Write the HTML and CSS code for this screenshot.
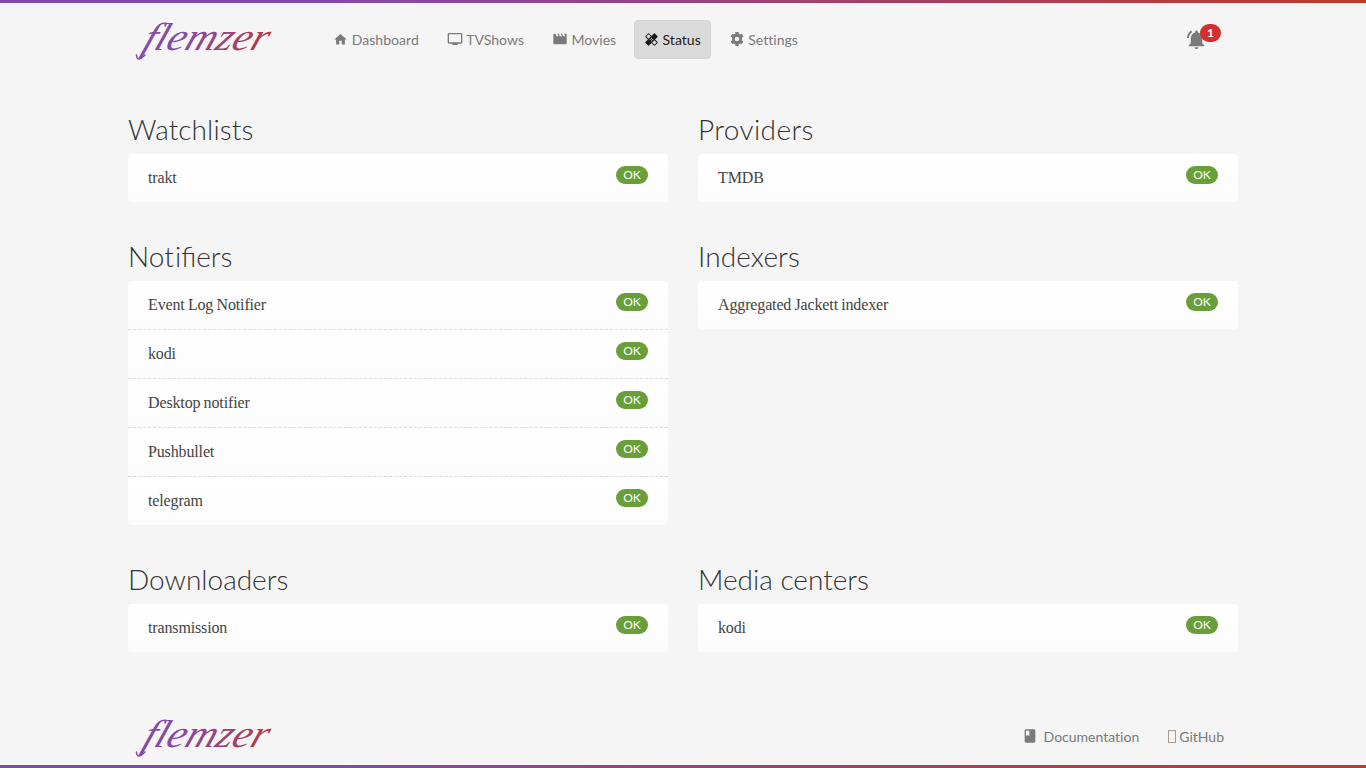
FILE: index.html
```html
<!DOCTYPE html>
<html lang="en">
<head>
<meta charset="utf-8">
<title>flemzer - Status</title>
<link rel="stylesheet" href="styles.css">
</head>
<body>
<div class="page">
  <header class="header">
    <svg class="logo" width="150" height="50" viewBox="0 0 150 50" role="img" aria-label="flemzer">
      <defs><linearGradient id="brand" gradientUnits="userSpaceOnUse" x1="8" y1="0" x2="142" y2="0"><stop offset="0" stop-color="#834ba8"/><stop offset=".3" stop-color="#834ba8"/><stop offset="1" stop-color="#b8383d"/></linearGradient></defs>
      <text class="logo-text" x="14" y="36" textLength="124" lengthAdjust="spacingAndGlyphs" transform="translate(12 0) skewX(-20)" fill="url(#brand)">flemzer</text>
      <path class="swash" d="M17 41Q9 49 8.500 41" stroke="#834ba8"/>
    </svg>
    <nav class="nav">
      <a class="nav-item"><svg class="icon" viewBox="0 0 24 24"><path d="M10 20v-6h4v6h5v-8h3L12 3 2 12h3v8z"/></svg>Dashboard</a>
      <a class="nav-item"><svg class="icon wide" viewBox="0 0 24 24"><path d="M21 3H3c-1.100 0-2 .9-2 2v12c0 1.100.9 2 2 2h5v2h8v-2h5c1.100 0 2-.9 2-2V5c0-1.100-.9-2-2-2zm0 14H3V5h18v12z"/></svg>TVShows</a>
      <a class="nav-item"><svg class="icon wide" viewBox="0 0 24 24"><path d="M18 4l2 4h-3l-2-4h-2l2 4h-3l-2-4H8l2 4H7L5 4H4c-1.100 0-2 .9-2 2v12c0 1.100.9 2 2 2h16c1.100 0 2-.9 2-2V4h-4z"/></svg>Movies</a>
      <a class="nav-item active"><svg class="icon" viewBox="0 0 24 24"><path d="M17.730 12.020l3.980-3.980c.39-.39.39-1.020 0-1.410l-4.340-4.340c-.39-.39-1.020-.39-1.410 0l-3.980 3.980L8 2.290c-.39-.39-1.020-.39-1.410 0L2.250 6.630c-.39.39-.39 1.020 0 1.410l3.980 3.980L2.250 16c-.39.39-.39 1.020 0 1.410l4.340 4.340c.39.39 1.020.39 1.410 0l3.980-3.980 3.980 3.980c.39.39 1.020.39 1.410 0l4.340-4.340c.39-.39.39-1.020 0-1.410l-3.980-3.980zM12 9c.55 0 1 .45 1 1s-.45 1-1 1-1-.45-1-1 .45-1 1-1zm-4.710 1.960L3.660 7.340l3.630-3.630 3.620 3.620-3.620 3.630zM10 13c-.55 0-1-.45-1-1s.45-1 1-1 1 .45 1 1-.45 1-1 1zm2 2c-.55 0-1-.45-1-1s.45-1 1-1 1 .45 1 1-.45 1-1 1zm2-4c.55 0 1 .45 1 1s-.45 1-1 1-1-.45-1-1 .45-1 1-1zm2.660 9.340l-3.630-3.620 3.630-3.630 3.620 3.620-3.620 3.630z"/></svg>Status</a>
      <a class="nav-item"><svg class="icon wide" viewBox="0 0 24 24"><path fill-rule="evenodd" d="M9.800 1.500h4.400l.5 2.800 1.900 1.100 2.700-1 2.200 3.800-2.200 1.900v3.800l2.200 1.900-2.200 3.800-2.700-1-1.900 1.100-.5 2.800H9.800l-.5-2.800-1.900-1.100-2.700 1-2.200-3.800 2.200-1.900v-3.800L2.500 8.200l2.200-3.800 2.700 1 1.900-1.100zM12 8.500a3.500 3.500 0 1 0 0 7 3.500 3.500 0 0 0 0-7z"/></svg>Settings</a>
    </nav>
    <a class="alerts"><svg class="bell" viewBox="0 0 24 24"><path d="M7.580 4.080L6.150 2.650C3.750 4.480 2.170 7.300 2.030 10.500h2c.15-2.650 1.510-4.970 3.550-6.420zM18 11c0-3.070-1.640-5.640-4.500-6.320V4c0-.83-.67-1.500-1.500-1.500s-1.500.67-1.500 1.500v.68C7.630 5.360 6 7.920 6 11v5l-2 2v1h16v-1l-2-2zM12 22c1.100 0 2-.9 2-2h-4c0 1.100.9 2 2 2z"/></svg><span class="count">1</span></a>
  </header>
  <main class="grid">
    <section><h2 class="wide-text">Watchlists</h2><ul class="list"><li>trakt<span class="ok">OK</span></li></ul></section>
    <section><h2 class="loose">Providers</h2><ul class="list"><li>TMDB<span class="ok">OK</span></li></ul></section>
    <section><h2>No<span class="plain">t</span>ifiers</h2><ul class="list">
      <li>Event Log Notifier<span class="ok">OK</span></li>
      <li>kodi<span class="ok">OK</span></li>
      <li>Desktop notifier<span class="ok">OK</span></li>
      <li>Pushbullet<span class="ok">OK</span></li>
      <li>telegram<span class="ok">OK</span></li></ul></section>
    <section><h2 class="wide-text">Indexers</h2><ul class="list"><li>Aggregated Jackett indexer<span class="ok">OK</span></li></ul></section>
    <section><h2>Downloaders</h2><ul class="list"><li>transmission<span class="ok">OK</span></li></ul></section>
    <section><h2>Media centers</h2><ul class="list"><li>kodi<span class="ok">OK</span></li></ul></section>
  </main>
  <footer class="footer">
    <svg class="logo" width="150" height="50" viewBox="0 0 150 50" role="img" aria-label="flemzer">
      <text class="logo-text" x="14" y="36" textLength="124" lengthAdjust="spacingAndGlyphs" transform="translate(12 0) skewX(-20)" fill="url(#brand)">flemzer</text>
      <path class="swash" d="M17 41Q9 49 8.500 41" stroke="#834ba8"/>
    </svg>
    <div class="links">
      <a class="link docs"><svg class="icon wide" viewBox="0 0 24 24"><path d="M18 2H6c-1.100 0-2 .9-2 2v16c0 1.100.9 2 2 2h12c1.100 0 2-.9 2-2V4c0-1.100-.9-2-2-2zM6 4h5v8l-2.500-1.500L6 12V4z"/></svg>Documentation</a>
      <a class="link"><span class="missing"></span>GitHub</a>
    </div>
  </footer>
</div>
</body>
</html>
```
FILE: styles.css
```css
* { box-sizing: border-box; }
body { margin: 0; background: linear-gradient(90deg, #834ba8 25%, #c0392b); font-family: Lato, sans-serif; color: #333; }
.page { height: 768px; padding: 0 128px; border: solid transparent; border-width: 3px 0; background: #f5f5f5 padding-box; display: flex; flex-direction: column; overflow: hidden; }
.header { height: 72px; display: flex; align-items: center; }
.logo { display: block; flex: none; overflow: visible; }
.logo-text { font: italic 39px "Liberation Serif", serif; }
.swash { fill: none; stroke-width: 1.5; stroke-linecap: round; }
.nav { display: flex; gap: 7.6px; margin-left: 45px; }
.nav-item { display: flex; align-items: center; height: 39px; padding: 0 9px; border: 1px solid transparent; border-radius: 4px; font-size: 14px; letter-spacing: .03px; font-variant-ligatures: none; color: #7a7a7a; }
.nav-item.active { background: #dadada; border-color: #d3d3d3; color: #1a1a1a; }
.icon { width: 15px; height: 15px; margin-right: 3px; fill: currentColor; flex: none; }
.icon.wide { width: 16px; height: 16px; }
.nav .icon { margin-right: 3.5px; margin-left: .3px; }
.alerts { display: flex; margin-left: auto; margin-right: 16px; color: #7a7a7a; }
.bell { width: 23px; height: 23px; fill: currentColor; }
.count { width: 21px; height: 18px; margin: -4px 1px 0 -8px; border-radius: 9px; background: #d32f2f; color: #fff; font-weight: 700; font-size: 12px; line-height: 18px; text-align: center; }
.grid { display: grid; grid-template-columns: 540px 540px; gap: 37px 30px; margin-top: 36px; align-items: start; }
h2 { margin: 0; height: 43px; padding-bottom: 1px; font-size: 28px; font-weight: 300; line-height: 36px; }
.loose { letter-spacing: .4px; }
.wide-text { letter-spacing: .1px; }
.plain { font-variant-ligatures: none; letter-spacing: 1px; }
section { margin-bottom: -1px; }
.list { margin: 0; padding: 0; list-style: none; border-radius: 4px; overflow: hidden; font-family: "Liberation Serif", serif; font-size: 16px; letter-spacing: -.14px; word-spacing: -.6px; color: #444; }
.list li { display: flex; justify-content: space-between; height: 48px; padding: 0 20px; line-height: 48px; background: linear-gradient(#fff, #fcfcfc); }
.list li + li { height: 49px; border-top: 1px dashed #dadada; }
.ok { width: 32px; height: 18px; margin-top: 12px; border-radius: 9px; background: #689f38; color: #fff; font: 12px/18px Lato, sans-serif; letter-spacing: 0; text-align: center; }
.footer { display: flex; align-items: center; justify-content: space-between; height: 50px; margin-top: 60px; }
.links { display: flex; gap: 29px; padding-right: 14px; }
.link { display: flex; align-items: center; font-size: 14px; font-variant-ligatures: none; color: #7a7a7a; }
.docs .icon { margin-right: 6px; }
.missing { width: 8px; height: 13px; border: 1px solid #a99d92; margin-right: 3px; }
```
